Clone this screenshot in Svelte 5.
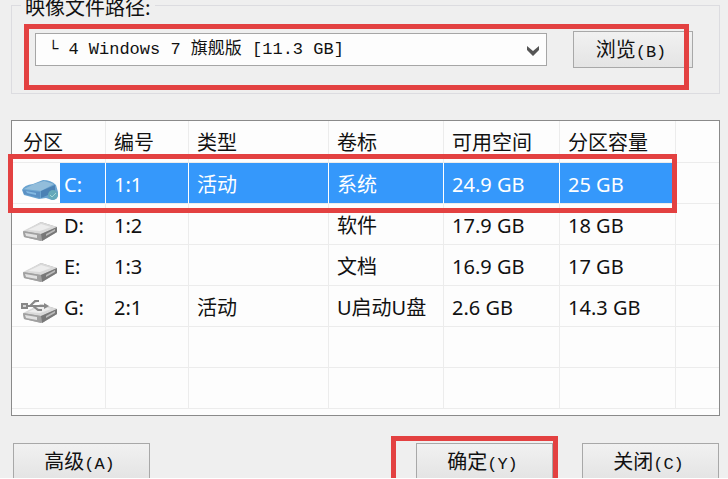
<script>
  const images = ['└ 4 Windows 7 旗舰版 [11.3 GB]'];
  let image = $state(images[0]);
  let selected = $state('C:');

  const headers = ['分区', '编号', '类型', '卷标', '可用空间', '分区容量'];
  const partitions = [
    { drive: 'C:', icon: 'system', cells: ['1:1', '活动', '系统', '24.9 GB', '25 GB'] },
    { drive: 'D:', icon: 'disk', cells: ['1:2', '', '软件', '17.9 GB', '18 GB'] },
    { drive: 'E:', icon: 'disk', cells: ['1:3', '', '文档', '16.9 GB', '17 GB'] },
    { drive: 'G:', icon: 'usb', cells: ['2:1', '活动', 'U启动U盘', '2.6 GB', '14.3 GB'] }
  ];
  const emptyRows = [0, 1];
</script>

{#snippet driveIcon(kind)}
  <svg class="drive" viewBox="0 0 38 26" aria-hidden="true">
    {#if kind === 'system'}
      <path d="M1 14 Q3 9 12 8 L22 4 Q30 4 35 9 L37 16 Q38 23 31 24 L25 22 L18 23 L3 19Z" fill="#6aa3cf" />
      <path d="M3 13 L13 8 L23 5 L33 8 L20 15Z" fill="#92bddb" />
      <path d="M2 14 L19 16 V22 L3 18Z" fill="#5a90c4" />
      <path d="M5 15 L15 17 V19 L6 17Z" fill="#83b9e2" />
      <path d="M20 15 L34 9 V16 L20 22Z" fill="#4b81b4" />
      <circle cx="32" cy="19" r="5" fill="#65a9ba" />
      <path d="M29 19 L31 21 L35 17" fill="none" stroke="#a4d5d4" stroke-width="1" />
    {:else}
      <path d="M2 15 L20 5 L36 10 L36 15 L21 24 L3 20Z" fill="#aaa" />
      <path d="M2 14 L20 5 L36 10 L20 17Z" fill="#d9d9d9" />
      <path d="M7 13 L20 7 L30 10 L19 14Z" fill="#ededed" />
      <path d="M2 14 L20 17 V24 L3 20Z" fill="#a0a0a0" />
      <path d="M4 16 L16 18 V21 L5 19Z" fill="#e1e1e1" />
      <path d="M20 17 L36 10 V15 L21 24Z" fill="#787878" />
      <path d="M25 17 L34 12 V14 L25 19Z" fill="#b9b9b9" />
      {#if kind === 'usb'}
        <path d="M1 5 H6 V9 H1Z M6 7 H24 M9 7 L14 2 H18 M12 7 L17 11 H21" fill="#999" fill-opacity="0.4" stroke="#888" stroke-width="2" />
        <path d="M23 4 L28 7 L23 10Z" fill="#888" />
      {/if}
    {/if}
  </svg>
{/snippet}

<main>
  <fieldset>
    <legend><label for="image">映像文件路径:</label></legend>
    <div class="source">
      <div class="picker">
        <select id="image" bind:value={image}>
          {#each images as name}
            <option value={name}>{name}</option>
          {/each}
        </select>
        <svg class="chevron" viewBox="0 0 12 10" aria-hidden="true">
          <path d="M0 0 L6 5 L12 0 V4 L6 10 L0 4Z" fill="#555" />
        </svg>
      </div>
      <button type="button" class="browse">浏览<span>(B)</span></button>
      <div class="mark mark-source"></div>
    </div>
  </fieldset>

  <div class="list">
    <table>
      <colgroup>
        <col class="c-drive" /><col class="c-number" /><col class="c-type" />
        <col class="c-label" /><col class="c-size" /><col class="c-size" /><col />
      </colgroup>
      <thead>
        <tr>
          {#each headers as header}
            <th scope="col">{header}</th>
          {/each}
          <td></td>
        </tr>
      </thead>
      <tbody>
        {#each partitions as row (row.drive)}
          <tr class:selected={row.drive === selected} onclick={() => (selected = row.drive)}>
            <td class="name">
              <div>{@render driveIcon(row.icon)}<span>{row.drive}</span></div>
            </td>
            {#each row.cells as cell}
              <td>{cell}</td>
            {/each}
            <td></td>
          </tr>
        {/each}
        {#each emptyRows as empty (empty)}
          <tr><td></td><td></td><td></td><td></td><td></td><td></td><td></td></tr>
        {/each}
      </tbody>
    </table>
    <div class="mark mark-row"></div>
  </div>

  <footer>
    <button type="button">高级<span>(A)</span></button>
    <div class="confirm">
      <button type="button">确定<span>(Y)</span></button>
      <div class="mark mark-confirm"></div>
    </div>
    <button type="button">关闭<span>(C)</span></button>
  </footer>
</main>

<style>
  :global(body) {
    margin: 0;
    background: #fff;
  }

  main {
    box-sizing: border-box;
    max-height: 100vh;
    overflow: hidden;
    padding: 0 8px 0 11px;
    border-bottom: 1px solid #fff;
    background: #efefef;
    background-clip: padding-box;
    color: #111;
    font: 20px/24px "Noto Sans", "Noto Sans CJK SC", sans-serif;
  }

  fieldset {
    min-width: 0;
    margin: -9px 0 0;
    padding: 12px 26px 25px 23px;
    border: 1px solid #dcdce0;
  }

  legend {
    margin-left: -14px;
    padding: 4px 4px 0;
    font-family: "Noto Sans CJK SC", sans-serif;
  }

  .source {
    position: relative;
    display: flex;
    align-items: center;
    gap: 26px;
  }

  .picker {
    position: relative;
    flex: 1;
    min-width: 0;
  }

  select {
    display: block;
    box-sizing: border-box;
    width: 100%;
    height: 33px;
    padding: 0 32px 0 12px;
    border: 1px solid #a6a6a6;
    border-radius: 0;
    appearance: none;
    background: #fdfdfd;
    color: #111;
    font: 17px/24px "Liberation Mono", "Noto Sans CJK SC", monospace;
  }

  .chevron {
    position: absolute;
    top: 13px;
    right: 8px;
    width: 12px;
    height: 10px;
    pointer-events: none;
  }

  button {
    box-sizing: border-box;
    width: 137px;
    height: 37px;
    padding: 2px 4px 0 0;
    border: 1px solid #a8a8a8;
    border-radius: 0;
    background: linear-gradient(#f1f1f1, #e4e4e4);
    color: #111;
    font: 20px/24px "Noto Sans CJK SC", sans-serif;
  }

  button span {
    font-family: "Liberation Mono", monospace;
    font-size: 17px;
  }

  .browse {
    width: 120px;
  }

  .mark {
    position: absolute;
    border: 5px solid #e34141;
    pointer-events: none;
  }

  .mark-source {
    inset: -7px 4px -22px -11px;
  }

  .list {
    position: relative;
    margin-top: 26px;
    padding-bottom: 6px;
    border: 1px solid #8a8a8a;
    background: #fdfdfd;
  }

  .mark-row {
    top: 33px;
    right: 42px;
    left: -4px;
    height: 49px;
  }

  table {
    width: 100%;
    table-layout: fixed;
    border-collapse: separate;
    border-spacing: 0;
  }

  .c-drive { width: 94px; }
  .c-number { width: 83px; }
  .c-type { width: 140px; }
  .c-label { width: 115px; }
  .c-size { width: 116px; }

  th,
  td {
    box-sizing: border-box;
    height: 41px;
    padding: 3px 0 0 8px;
    border-right: 1px solid #ececec;
    border-bottom: 1px solid #ececec;
    font-weight: 400;
    text-align: left;
    white-space: nowrap;
  }

  thead th,
  thead td {
    height: 42px;
  }

  th:first-child {
    padding-left: 11px;
  }

  td:last-child {
    border-right: 0;
  }

  .name {
    padding: 0;
  }

  .name div {
    display: flex;
    align-items: center;
    height: 40px;
  }

  .name span {
    box-sizing: border-box;
    flex: 1;
    height: 40px;
    padding: 3px 0 0 4px;
    line-height: 37px;
  }

  .drive {
    width: 38px;
    height: 26px;
    padding: 12px 1px 0 9px;
  }

  .selected td {
    border-right-color: #fff;
    background: #3598fb;
    color: #fff;
  }

  .selected td:last-child,
  .selected .name {
    background: none;
  }

  .selected .name span {
    background: #3598fb;
  }

  footer {
    display: flex;
    gap: 29px;
    padding: 27px 1px 0 2px;
  }

  .confirm {
    position: relative;
    margin-left: auto;
  }

  .mark-confirm {
    inset: -7px -5px -12px -25px;
  }
</style>
